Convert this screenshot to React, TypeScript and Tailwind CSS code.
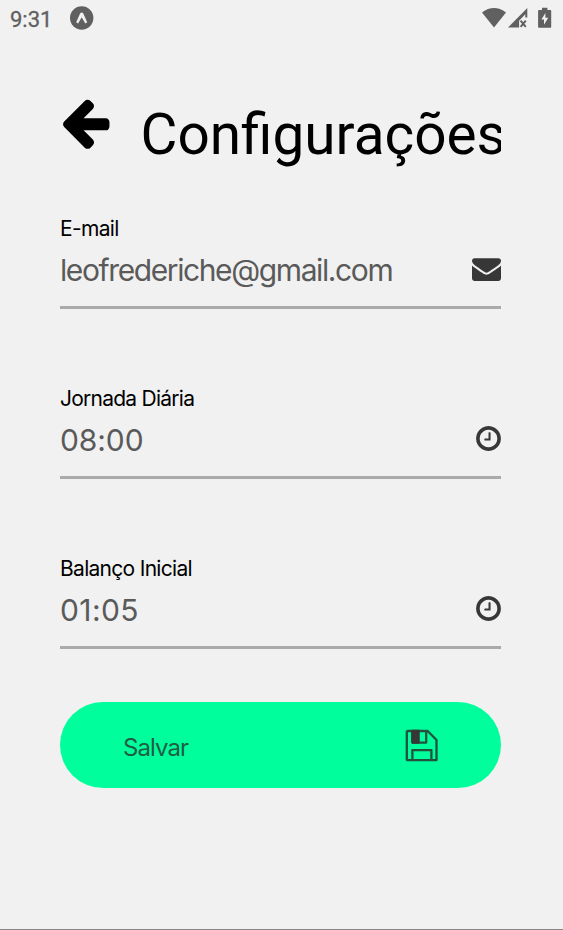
import React from "react";

const ENVELOPE =
  "M1792 710v794q0 66-47 113t-113 47h-1472q-66 0-113-47t-47-113v-794q44 49 101 87 362 246 497 345 57 42 92.5 65.5t94.5 48 110 24.5h2q51 0 110-24.5t94.5-48 92.5-65.5q170-123 498-345 57-39 100-87zm0-294q0 79-49 151t-122 123q-376 261-468 325-10 7-42.5 31t-54 38.5-52 32.5-57.5 27-50 9h-2q-23 0-50-9t-57.5-27-52-32.5-54-38.5-42.5-31q-91-64-262-182.5t-205-142.5q-62-42-117-115.5t-55-136.5q0-78 41.5-130t118.5-52h1472q65 0 112.5 47t47.5 113z";
const CLOCK =
  "M1024 544v448q0 14-9 23t-23 9h-320q-14 0-23-9t-9-23v-64q0-14 9-23t23-9h224v-352q0-14 9-23t23-9h64q14 0 23 9t9 23zm416 352q0-148-73-273t-198-198-273-73-273 73-198 198-73 273 73 273 198 198 273 73 273-73 198-198 73-273zm224 0q0 209-103 385.5t-279.5 279.5-385.5 103-385.5-103-279.5-279.5-103-385.5 103-385.5 279.5-279.5 385.5-103 385.5 103 279.5 279.5 103 385.5z";
const ARROW =
  "M1664 896v128q0 53-32.5 90.5t-84.5 37.5h-704l293 294q38 36 38 90t-38 90l-75 76q-37 37-90 37-52 0-91-37l-651-652q-37-37-37-90 0-52 37-91l651-650q38-38 91-38 52 0 90 38l75 74q38 38 38 91t-38 91l-293 293h704q52 0 84.5 37.5t32.5 90.5z";

function StatusBar() {
  return (
    <header className="flex h-[37px] items-center justify-between pl-[10px] pr-[11px] text-[#606060]">
      <div className="flex items-center gap-[18px]">
        <span className="w-[42px] whitespace-nowrap pt-px font-['Roboto',sans-serif] text-[22px] leading-[37px] [-webkit-text-stroke:0.3px_#606060]">9:31</span>
        <svg className="mb-[2px] size-6" viewBox="0 0 24 24">
          <circle cx="11.7" cy="12" r="11.7" fill="#606060" />
          <path d="M6.2 16.2 10.1 7.4q1.6-1.8 3.2 0l3.9 8.8-1.9 1.2-3.6-6.2-3.6 6.2z" fill="#f1f1f1" />
        </svg>
      </div>
      <svg className="mb-px h-[24px] w-[70px]" viewBox="0 0 70 24" fill="currentColor">
        <path d="M0 6.4Q12 -2.5 24 6.4L12 21.4z" />
        <path d="M45.3 2v9.5h-2V8.2l-6.2 6.5v6.8H26z" />
        <path d="m38.6 14.6 5.2 6.2m0-6.2-5.2 6.2" stroke="currentColor" strokeWidth="2" />
        <path fillRule="evenodd" d="M57 4h3V1.8h5.4V4h3q.8 0 .8 1v15.8q0 .9-.8.9H57q-.9 0-.9-.9V5q0-1 .9-1zm6.4 3-4 6.6h2.6v5.2l4.2-7h-2.8z" />
      </svg>
    </header>
  );
}

type FieldProps = {
  label: string;
  labelClass: string;
  value: string;
  valueClass: string;
  icon: string;
};

function Field({ label, labelClass, value, valueClass, icon }: FieldProps) {
  return (
    <div className="h-[170px]">
      <div className="h-[98px] border-b-[3px] border-[#aaaaaa]">
        <p className={"pt-[3px] text-[21px] leading-[30px] text-black " + labelClass}>{label}</p>
        <div className="flex h-[54px] items-center justify-between">
          <span className={"pb-[2px] text-[30px] leading-[52px] text-[#5a5a5a] " + valueClass}>{value}</span>
          <svg
            className={icon === CLOCK ? "-mr-[2px] mb-[5px] size-[29px]" : "mb-[5px] size-[29px]"}
            viewBox="0 0 1792 1792"
            fill="#373737"
          >
            <path d={icon} />
          </svg>
        </div>
      </div>
    </div>
  );
}

export default function App() {
  return (
    <div className="flex h-[930px] w-[563px] flex-col overflow-hidden border-b border-[#888888] bg-[#f1f1f1] font-['Inter',sans-serif]">
      <StatusBar />
      <main className="pl-[60px] pr-[62px] pt-[58px]">
        <div className="flex h-[116px]">
          <svg className="-ml-[3.5px] -mt-[1.5px] size-[56.5px] shrink-0" viewBox="0 0 1792 1792">
            <path d={ARROW} />
          </svg>
          <h1 className="ml-[27.5px] flex-1 overflow-hidden whitespace-nowrap pt-px font-['Roboto',sans-serif] text-[56.7px] leading-[78px] text-black">Configurações</h1>
        </div>
        <Field label="E-mail" labelClass="tracking-[-0.65px]" value="leofrederiche@gmail.com" valueClass="tracking-[-1.4px]" icon={ENVELOPE} />
        <Field label="Jornada Diária" labelClass="tracking-[-0.75px]" value="08:00" valueClass="tracking-[-0.1px]" icon={CLOCK} />
        <Field label="Balanço Inicial" labelClass="tracking-[-0.7px]" value="01:05" valueClass="tracking-[0.4px]" icon={CLOCK} />
        <button className="-mt-[19px] flex h-[86px] w-full items-center justify-between rounded-full bg-[#00ff9c] pl-[63px] pr-[62px] text-[#1f5e45]">
          <span className="pt-[6px] text-[24px] tracking-[-0.95px]">Salvar</span>
          <svg className="mt-[2px] size-[34px]" viewBox="0 0 34 34" fill="none" stroke="#22513d" strokeWidth="2.3" strokeLinejoin="round">
            <path d="M2.8 2h19.9l8.8 9v20.2H2.8q-1 0-1-1V3q0-1 1-1zM7.4 2v11.6h13.8V2M7.4 31.2V21.1h19v10.1" />
            <path d="M7.4 2h6.2v11.6H7.4z" fill="#373737" stroke="#373737" />
          </svg>
        </button>
      </main>
    </div>
  );
}
